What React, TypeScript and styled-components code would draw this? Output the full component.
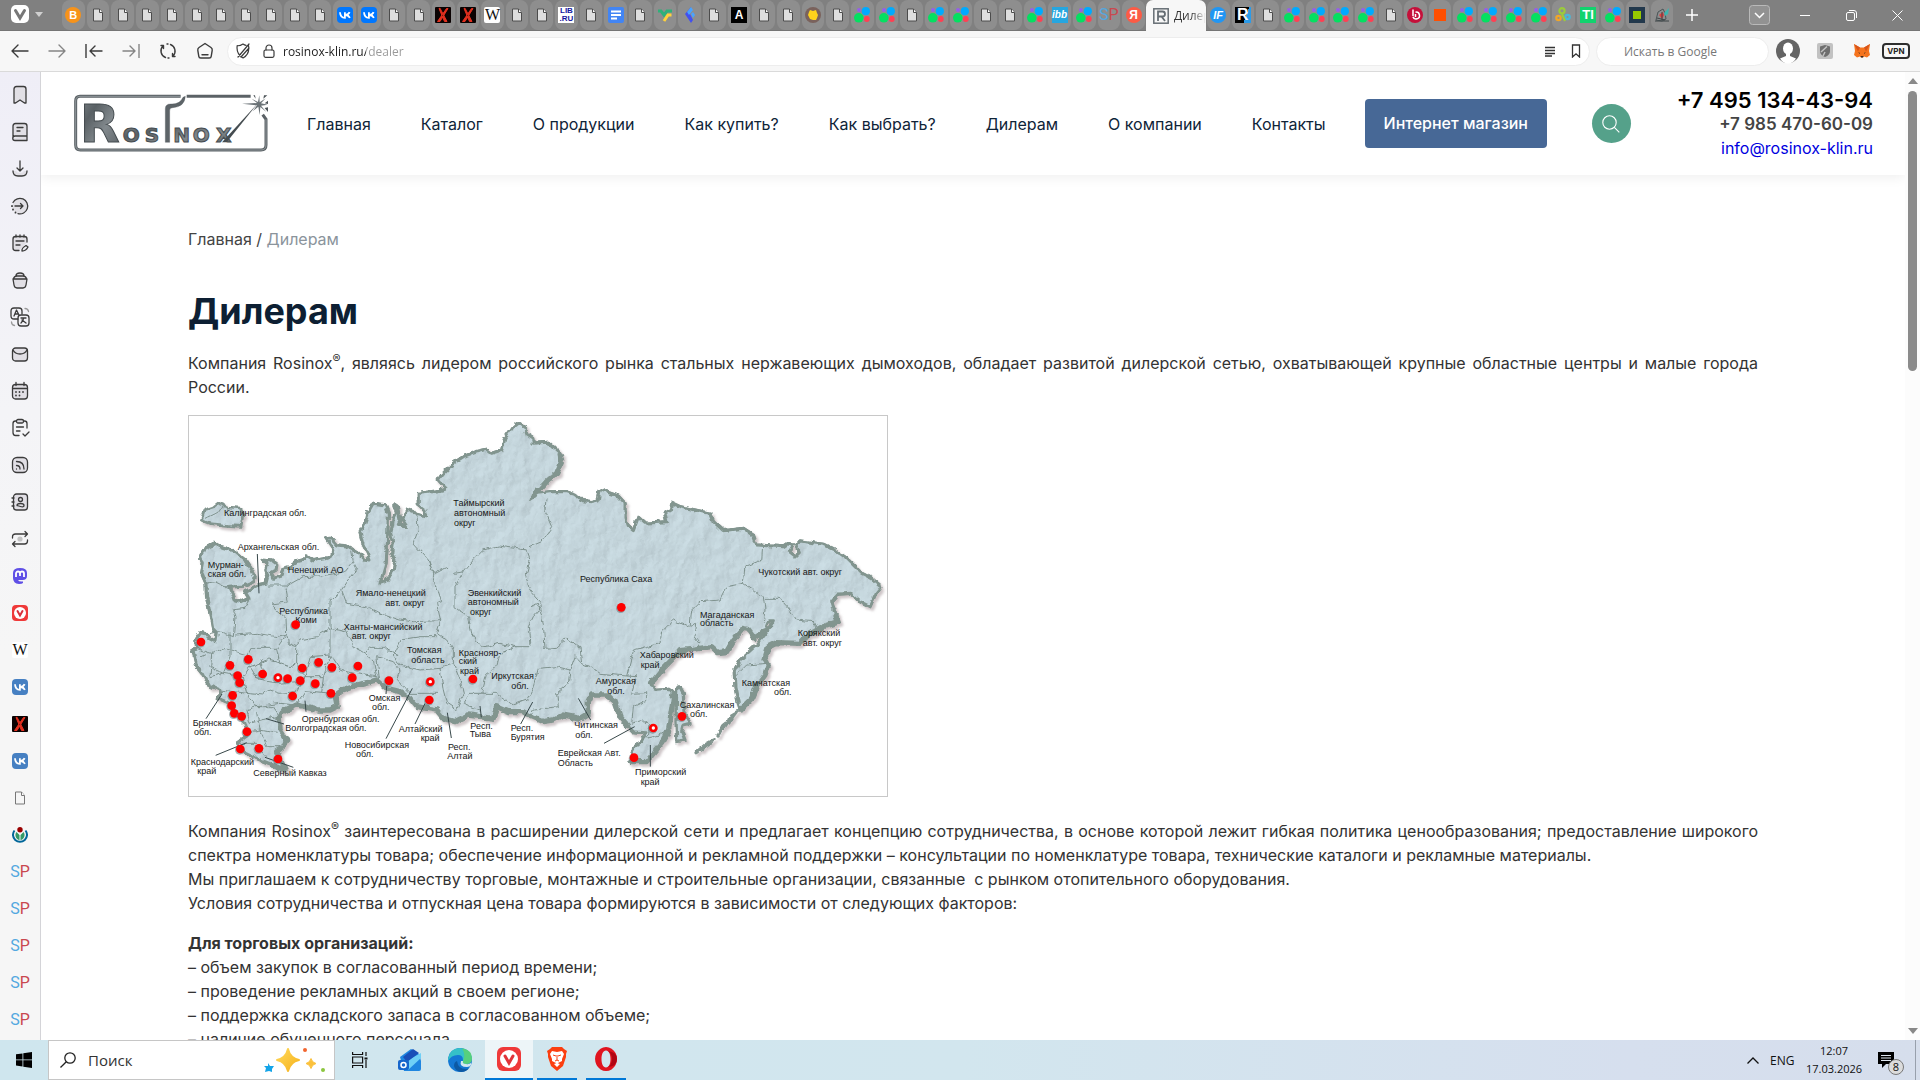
import React from "react";
import styled, { createGlobalStyle } from "styled-components";

const GlobalStyle = createGlobalStyle`
  *, *::before, *::after { box-sizing: border-box; }
  html, body, #root { height: 100%; }
  body { margin: 0; overflow: hidden; background: #fff; }
  button, input { font: inherit; color: inherit; }
  button { border: 0; padding: 0; background: none; cursor: pointer; }
  input { border: 0; padding: 0; background: none; outline: 0; min-width: 0; }
  a { text-decoration: none; }
  svg { display: block; flex: none; }
`;

const uiFont = `"Open Sans", "Noto Sans", sans-serif`;
const siteFont = `Inter, "Open Sans", sans-serif`;

const Screen = styled.div`
  height: 100vh;
  display: flex;
  flex-direction: column;
  font-family: ${uiFont};
`;

/* ---------- tab strip ---------- */

const TabBar = styled.div`
  height: 31px;
  flex: none;
  display: flex;
  background: #808080;
  border-bottom: 1px solid #757575;
`;
const AppMenu = styled.button`
  width: 61px;
  padding: 0 0 2px 11px;
  display: flex;
  align-items: center;
  gap: 6px;
`;
const TabList = styled.div`
  flex: 1;
  display: flex;
  min-width: 0;
`;
const Tab = styled.button<{ $active?: boolean }>`
  flex: ${(p) => (p.$active ? "0 0 60px" : "1 1 0")};
  min-width: 0;
  height: ${(p) => (p.$active ? 31 : 30)}px;
  margin: 0 ${(p) => (p.$active ? 0 : 1)}px;
  padding: ${(p) => (p.$active ? "0 4px 0 7px" : "0")};
  display: flex;
  align-items: center;
  justify-content: ${(p) => (p.$active ? "flex-start" : "center")};
  gap: 5px;
  overflow: hidden;
  border-radius: ${(p) => (p.$active ? "7px 7px 0 0" : "8px")};
  background: ${(p) => (p.$active ? "#f7f7f7" : "#8e8e8e")};
`;
const TabTitle = styled.span`
  font-size: 12px;
  white-space: nowrap;
  color: transparent;
  background: linear-gradient(90deg, #333 18px, #f7f7f7 32px);
  background-clip: text;
`;
const WindowButtons = styled.div`
  width: 246px;
  display: flex;
  align-items: center;
  color: #fff;
`;
const WinButton = styled.button<{ $gap?: number }>`
  width: ${(p) => (p.$gap === undefined ? 46 : 36)}px;
  height: 30px;
  margin-right: ${(p) => p.$gap ?? 0}px;
  display: flex;
  align-items: center;
  justify-content: center;
`;

/* Square favicon made of one or a few letters */
const Glyph = styled.span<{ $bg: string; $fg: string; $size?: number; $r?: number; $font?: string }>`
  width: 16px;
  height: 16px;
  flex: none;
  display: flex;
  align-items: center;
  justify-content: center;
  border-radius: ${(p) => p.$r ?? 0}px;
  background: ${(p) => p.$bg};
  color: ${(p) => p.$fg};
  font: bold ${(p) => p.$size ?? 13}px/16px ${(p) => p.$font ?? `"Liberation Sans", sans-serif`};
`;
const ItalicGlyph = styled(Glyph)`
  font-style: italic;
`;
const SerifGlyph = styled(Glyph)`
  font-weight: 400;
`;
const SpMark = styled.span`
  font: 16px/16px Roboto, "Liberation Sans", sans-serif;
  color: #53a8e0;
  b { font-weight: 400; color: #c9484f; }
`;

const Doc = ({ light }: { light?: boolean }) => (
  <svg width="12" height="16" viewBox="0 0 12 16">
    <path d="M1.500 2h6l3 3.500V14h-9z" fill={light ? "#f6f6f6" : "#dedede"} stroke={light ? "#777" : "#4c4c4c"} strokeWidth="1" />
    <path d="M7.500 2v3.500h3" fill="#fff" stroke={light ? "#777" : "#4c4c4c"} strokeWidth="1" />
  </svg>
);
const Vk = ({ tone = "#0077ff" }: { tone?: string }) => (
  <svg width="16" height="16" viewBox="0 0 16 16">
    <rect width="16" height="16" rx="4" fill={tone} />
    <path d="M3 5.200c.2 3.400 2 5.600 4.900 5.600V5.200M12.600 5.200c-.6 1.500-1.900 2.600-3.900 2.800 2 .2 3.500 1.300 4.200 2.800" fill="none" stroke="#fff" strokeWidth="1.800" />
  </svg>
);
const Avito = () => (
  <svg width="16" height="16" viewBox="0 0 16 16">
    <circle cx="5" cy="3" r="2" fill="#965eeb" />
    <circle cx="11.800" cy="4.200" r="4.100" fill="#0af" />
    <circle cx="4.800" cy="10.800" r="4.800" fill="#04e061" />
    <circle cx="12.800" cy="12" r="2.900" fill="#ff4053" />
  </svg>
);
const XMark = () => (
  <svg width="16" height="16" viewBox="0 0 16 16">
    <rect width="16" height="16" rx="1" fill="#0a0202" />
    <path d="M4 1.500 5 1.200 12 14.500h-2.500zM13 1.500h-1.500L2.500 14.500H5z" fill="#e3301f" stroke="#e3301f" />
  </svg>
);
const Bitcoin = () => <Glyph $bg="#f7931a" $fg="#fff" $r={8} $size={11}>B</Glyph>;
const Wiki = () => <SerifGlyph $bg="#fff" $fg="#111" $r={2} $size={16} $font={`"Liberation Serif", serif`}>W</SerifGlyph>;
const LibText = styled.span`
  width: 16px;
  height: 16px;
  background: #fff;
  color: #1515a0;
  font: bold 8px/8px "Liberation Sans", sans-serif;
  text-align: center;
`;
const GDoc = () => (
  <svg width="16" height="16" viewBox="0 0 16 16">
    <rect width="16" height="16" rx="2" fill="#4285f4" />
    <path d="M3 4.500h10M3 8h10M3 11.500h6" stroke="#fff" strokeWidth="1.800" />
  </svg>
);
const Swoosh = () => (
  <svg width="16" height="16" viewBox="0 0 16 16">
    <path d="M1 4h3l3 4 3-4h5" fill="none" stroke="#2fb07a" strokeWidth="3" />
    <path d="M14.500 8h-3.500L7 14" fill="none" stroke="#ffd23c" strokeWidth="3" />
  </svg>
);
const BlueArrow = () => (
  <svg width="16" height="16" viewBox="0 0 16 16">
    <path d="M9 0 3 7l6 9 2-3-3-6z" fill="#4250f0" />
    <path d="m9 0 2 3-4 5-2-3zM9 7l2-2 2 3-2 3z" fill="#4aa3ff" />
  </svg>
);
const GoldSeal = () => (
  <svg width="16" height="16" viewBox="0 0 16 16">
    <circle cx="8" cy="8" r="8" fill="#7a625c" />
    <path d="m5 3 3 1 3-1 1 3 1 2-1 3-1 2H8l-3-1-1-2-1-2 1-3z" fill="#ffd21c" />
  </svg>
);
const Beats = () => (
  <svg width="16" height="16" viewBox="0 0 16 16">
    <circle cx="8" cy="8" r="8" fill="#c5103a" />
    <path d="M6 2.500V9M8.500 5.200a3.400 3.400 0 1 1-2.600 4.500M8.500 7v3" fill="none" stroke="#fff" strokeWidth="1.500" />
  </svg>
);
const MapPin = () => (
  <svg width="16" height="16" viewBox="0 0 16 16" fill="none" strokeWidth="2.200">
    <circle cx="7" cy="3.800" r="2.600" stroke="#9bcb3c" />
    <circle cx="3.500" cy="11" r="2.200" stroke="#f0a629" />
    <circle cx="12.500" cy="10" r="2.200" stroke="#4bb7d8" />
    <path d="m7 7 3 7" stroke="#9bcb3c" />
  </svg>
);
const Chip = () => (
  <svg width="16" height="16" viewBox="0 0 16 16">
    <rect width="16" height="16" fill="#22384c" />
    <rect x="4" y="4" width="8" height="8" fill="#97c800" />
  </svg>
);
const Bird = () => (
  <svg width="16" height="16" viewBox="0 0 16 16">
    <path d="M2 13 4 5l5-3 2 4 1 6-4 2z" fill="none" stroke="#4a5558" />
    <path d="m5 8 4-3 1 3-2 4z" fill="#e23f3f" />
    <path d="m10 6 5-5-1 6-3 2z" fill="#3cb5b0" />
    <path d="M1 14h14M3 11l8 2M8 5v8" stroke="#3d4547" />
  </svg>
);
const OrangeBox = styled.span`
  width: 12px;
  height: 12px;
  background: #ff4f00;
`;
const RosFavicon = () => (
  <svg width="16" height="16" viewBox="0 0 16 16" fill="none" stroke="#666e74">
    <rect x=".8" y=".8" width="14.400" height="14.400" strokeWidth="1.500" />
    <path d="M5 13V3.500h4.500a2.500 2.500 0 0 1 0 5H5.500M8.500 8.500 12 13" strokeWidth="1.800" />
  </svg>
);
const Mark = ({ kind }: { kind: string }) => {
  switch (kind) {
    case "b": return <Bitcoin />;
    case "v": return <Vk />;
    case "x": return <XMark />;
    case "w": return <Wiki />;
    case "l": return <LibText>LIB .RU</LibText>;
    case "g": return <GDoc />;
    case "s": return <Swoosh />;
    case "f": return <BlueArrow />;
    case "A": return <Glyph $bg="#000" $fg="#fff" $size={12}>A</Glyph>;
    case "y": return <GoldSeal />;
    case "a": return <Avito />;
    case "i": return <ItalicGlyph $bg="#26a6e0" $fg="#fff" $size={10}>ibb</ItalicGlyph>;
    case "p": return <SpMark>S<b>P</b></SpMark>;
    case "Y": return <Glyph $bg="#fc5b45" $fg="#fff" $r={8} $size={12}>Я</Glyph>;
    case "F": return <ItalicGlyph $bg="#2196f3" $fg="#fff" $r={8} $size={11}>IF</ItalicGlyph>;
    case "R": return <Glyph $bg="linear-gradient(110deg, #000 65%, #2c9be8 66%)" $fg="#fff" $size={16}>R</Glyph>;
    case "B": return <Beats />;
    case "o": return <OrangeBox />;
    case "m": return <MapPin />;
    case "T": return <Glyph $bg="#12d36e" $fg="#fff" $size={13}>TI</Glyph>;
    case "c": return <Chip />;
    case "h": return <Bird />;
    default: return <Doc />;
  }
};
const tabsBefore = "bddddddddddvvddxxwddldgdsfdAddydaadaaddaiapY".split("");
const tabsAfter = "FRdaaaadBoaaaamTach".split("");

const TabStrip = () => (
  <TabBar>
    <AppMenu aria-label="Vivaldi">
      <svg width="18" height="18" viewBox="0 0 18 18">
        <rect width="18" height="18" rx="5" fill="#fff" />
        <path d="M4.500 5.500 9 13l4.500-7.500" fill="none" stroke="#777" strokeWidth="3" strokeLinecap="round" />
      </svg>
      <svg width="8" height="5" viewBox="0 0 8 5"><path d="M0 0h8L4 5z" fill="#d0d0d0" /></svg>
    </AppMenu>
    <TabList>
      {tabsBefore.map((k, i) => <Tab key={i}><Mark kind={k} /></Tab>)}
      <Tab $active><RosFavicon /><TabTitle>Дилерам</TabTitle></Tab>
      {tabsAfter.map((k, i) => <Tab key={i}><Mark kind={k} /></Tab>)}
    </TabList>
    <WindowButtons>
      <WinButton $gap={26} aria-label="Новая вкладка"><svg width="12" height="12" viewBox="0 0 12 12"><path d="M6 0v12M0 6h12" stroke="#fff" strokeWidth="1.500" /></svg></WinButton>
      <WinButton aria-label="Список вкладок">
        <svg width="21" height="20" viewBox="0 0 21 20" fill="none">
          <rect x=".5" y=".5" width="20" height="19" rx="3" fill="#929292" stroke="#b9b9b9" />
          <path d="m6 8 4.500 4.500L15 8" stroke="#fff" strokeWidth="1.500" />
        </svg>
      </WinButton>
      <WinButton aria-label="Свернуть"><svg width="10" height="10"><path d="M0 5.500h10" stroke="#fff" /></svg></WinButton>
      <WinButton aria-label="Восстановить">
        <svg width="11" height="11" viewBox="0 0 11 11" fill="none" stroke="#fff">
          <rect x=".5" y="2.500" width="8" height="8" rx="1.500" />
          <path d="M3 .5h5a2.500 2.500 0 0 1 2.500 2.500v5" />
        </svg>
      </WinButton>
      <WinButton aria-label="Закрыть"><svg width="11" height="11" viewBox="0 0 11 11"><path d="m.5.500 10 10m0-10-10 10" stroke="#fff" /></svg></WinButton>
    </WindowButtons>
  </TabBar>
);

/* ---------- address bar ---------- */

const AddressBar = styled.div`
  height: 41px;
  flex: none;
  display: flex;
  align-items: center;
  padding: 0 10px 0 1px;
  background: #f7f7f7;
  border-bottom: 1px solid #dadada;
`;
const ToolButton = styled.button`
  width: 37px;
  height: 30px;
  flex: none;
  display: flex;
  align-items: center;
  justify-content: center;
`;
const Field = styled.label<{ $width?: number }>`
  height: 29px;
  flex: ${(p) => (p.$width ? `0 0 ${p.$width}px` : "1")};
  display: flex;
  align-items: center;
  margin-left: ${(p) => (p.$width ? 6 : 4)}px;
  padding: 0 ${(p) => (p.$width ? 27 : 8)}px;
  background: #fff;
  border: 1px solid #ededed;
  border-radius: 15px;
  font-size: 13px;
`;
const UrlInput = styled.input`
  flex: 1;
  margin-left: 7px;
  font-size: 12px;
  color: transparent;
  background: linear-gradient(90deg, #1c1c1c 83px, #999 83px);
  background-clip: text;
`;
const SearchInput = styled.input`
  width: 100%;
  font-size: 12px;
  &::placeholder { color: #777; opacity: 1; }
`;
const Vpn = styled.button`
  width: 28px;
  height: 16px;
  margin-left: 2px;
  border: 2px solid #2e2e2e;
  border-radius: 4px;
  font: bold 8px/12px Inter, sans-serif;
  color: #222;
`;
const stroke = { fill: "none", stroke: "#3b3b3b", strokeWidth: 1.4, strokeLinecap: "round" as const, strokeLinejoin: "round" as const };

const Toolbar = () => (
  <AddressBar>
    <ToolButton aria-label="Назад"><svg width="18" height="14" viewBox="0 0 18 14" {...stroke}><path d="M17 7H1m6-6L1 7l6 6" /></svg></ToolButton>
    <ToolButton aria-label="Вперёд"><svg width="18" height="14" viewBox="0 0 18 14" {...stroke} stroke="#858585"><path d="M1 7h16m-6-6 6 6-6 6" /></svg></ToolButton>
    <ToolButton aria-label="В начало"><svg width="18" height="14" viewBox="0 0 18 14" {...stroke}><path d="M1 0v14M17 7H5m5-5L5 7l5 5" /></svg></ToolButton>
    <ToolButton aria-label="В конец"><svg width="18" height="14" viewBox="0 0 18 14" {...stroke} stroke="#858585"><path d="M17 0v14M1 7h12M8 2l5 5-5 5" /></svg></ToolButton>
    <ToolButton aria-label="Обновить"><svg width="18" height="18" viewBox="0 0 18 18" {...stroke}><path d="M6.500 15.500A7 7 0 0 1 4 4M2 3.500l2.500 0v3M11.500 2.500A7 7 0 0 1 14 14m2 .5-2.500 0v-3M8 2h1M9 16h1" /></svg></ToolButton>
    <ToolButton aria-label="Домой"><svg width="18" height="18" viewBox="0 0 18 18" {...stroke}><path d="m9 1.500 6 4q1.500 1 1.200 2.800l-1 6Q15 16 13.300 16H4.700Q3 16 2.800 14.300l-1-6Q1.500 6.500 3 5.500zM6 12.800h6" /></svg></ToolButton>
    <Field>
      <svg width="14" height="16" viewBox="0 0 14 16" {...stroke} strokeWidth="1.200"><path d="M12.500 2.500Q14 11 7 15 0 11 1.200 2.700 4 3 7 1q1.500 1 3 1.400M13 1 2 14M13 5 5 14" /></svg>
      <svg width="26" height="14" viewBox="0 0 26 14" {...stroke} strokeWidth="1.200"><rect x="14" y="6" width="10" height="7.300" rx="1.500" /><path d="M16 6V4a3 3 0 0 1 6 0v2" /></svg>
      <UrlInput aria-label="Адрес" defaultValue="rosinox-klin.ru/dealer" />
      <svg width="36" height="14" viewBox="0 0 36 14" fill="none" stroke="#333" strokeWidth="1.300"><path d="M0 3.500h10M0 6.500h10M0 9.500h10M0 12h7M27.500 1h7v12L31 9.800 27.500 13z" /></svg>
    </Field>
    <Field $width={173}><SearchInput aria-label="Поиск в Google" placeholder="Искать в Google" /></Field>
    <ToolButton aria-label="Профиль">
      <svg width="26" height="26" viewBox="0 0 26 26"><circle cx="13" cy="13" r="12" fill="#646464" /><ellipse cx="13" cy="10.500" rx="5" ry="6" fill="#fff" /><path d="M11 15h4v3l6 2.500Q18 25.500 13 25.500T5 20.500L11 18z" fill="#fff" /></svg>
    </ToolButton>
    <ToolButton aria-label="Защита">
      <svg width="16" height="16" viewBox="0 0 16 16"><rect width="16" height="16" rx="2" fill="#c2c2c2" /><path d="M3 3.500 8 2l5 1.500V8q0 4-5 6-5-2-5-6z" fill="#6e6e6e" /><path d="m4 9 6-5.500M6 13l2-4" stroke="#c2c2c2" strokeWidth="1.500" /></svg>
    </ToolButton>
    <ToolButton aria-label="MetaMask">
      <svg width="16" height="16" viewBox="0 0 16 16"><path d="m0 1 6 3.500h4L16 1l-1 7 1 4-3 2.500-3-1-1 1H7l-1-1-3 1L0 12l1-4z" fill="#f5741e" /><path d="m0 1 6 3.500-2 4zM16 1l-6 3.500 2 4z" fill="#d9541a" /><path d="m4 9 2 1v1zM12 9l-2 1v1zM6.500 13h3L9 14.500H7z" fill="#3a2a22" /></svg>
    </ToolButton>
    <Vpn>VPN</Vpn>
  </AddressBar>
);

/* ---------- side panel ---------- */

const Workspace = styled.div`
  flex: 1;
  min-height: 0;
  display: flex;
`;
const Panel = styled.nav`
  width: 41px;
  flex: none;
  padding-top: 4px;
  display: flex;
  flex-direction: column;
  overflow: hidden;
  background: linear-gradient(#efeef7, #f4f4f7 35%, #f6f6f6 60%);
  border-right: 1px solid #d4d4d8;
`;
const PanelButton = styled.button`
  height: 37px;
  flex: none;
  display: flex;
  align-items: center;
  justify-content: center;
`;
const PanelIcon = ({ children }: { children: React.ReactNode }) => (
  <svg width="20" height="20" viewBox="0 0 20 20" {...stroke} strokeWidth="1.300">{children}</svg>
);
const soft = "#e1dfe5";
const panelItems: [string, React.ReactNode][] = [
  ["Закладки", <PanelIcon><path d="M4 4q0-2.500 2.500-2.500h7Q16 1.500 16 4v14l-1.500 0L10 15l-4.500 3H4z" fill={soft} /></PanelIcon>],
  ["Чтение", <PanelIcon><path d="M3 16V4q0-2.500 2.500-2.500h9Q17 1.500 17 4v10H5a2 2 0 0 0 0 4.500h12V14M7 5.500h6M7 9h3" fill={soft} /></PanelIcon>],
  ["Загрузки", <PanelIcon><path d="M10 2v10m-3-3 3 3 3-3" /><path d="M3 12q0 5 5 5h4q5 0 5-5l-3 0q-1 2-4 2t-4-2z" fill={soft} stroke="none" /><path d="M3 12q0 5 5 5h4q5 0 5-5" /></PanelIcon>],
  ["История", <PanelIcon><circle cx="10" cy="10" r="7.500" fill={soft} stroke="none" /><path d="M3 6.500a7.800 7.800 0 1 1 5 11.200M5 10h8m-2.500-2.500L13 10l-2.500 2.500" /><path d="M2 10v.2M3 13.500v.2M5.500 16.500v.2" strokeWidth="1.800" /></PanelIcon>],
  ["Заметки", <PanelIcon><path d="M17 9V6q0-2.500-2.500-2.500h-9Q3 3.500 3 6v9q0 2.500 2.500 2.500H9" fill={soft} /><path d="M6 2v2M10 2v2M14 2v2M6 8h8M6 12h4M12 18q-.5-3 4-5.500l2 1.500q-2 4-6 4" /></PanelIcon>],
  ["Окна", <PanelIcon><path d="M3 9h14l-1 6q-.5 3-3 3H7q-2.500 0-3-3zM3.500 9Q4 6 7 6h6q3 0 3.500 3M6 6q0-3 4-3t4 3" fill={soft} /></PanelIcon>],
  ["Переводчик", <PanelIcon><path d="M8 12H4q-3 0-3-3V4q0-3 3-3h5q3 0 3 3v3" /><rect x="8" y="8" width="11" height="11" rx="3" /><path d="M4 9l2.500-6L9 8M5 7h3M11 11h5M13.500 11q0 3-2.500 5M12 13l4 3" /><path d="M15 1.500q3 0 3.500 3M1.500 15q0 3 3 3.500" stroke="#999" /></PanelIcon>],
  ["Почта", <PanelIcon><rect x="2.500" y="4" width="15" height="13" rx="3" fill={soft} /><path d="M3 6q2 4 7 4t7-4" /></PanelIcon>],
  ["Календарь", <PanelIcon><rect x="2.500" y="3.500" width="15" height="14.500" rx="3" fill={soft} /><path d="M6 1.500v3M14 1.500v3M3 7.500h14" /><path d="M9.500 11v.1M13 11v.1M6 14.500v.1M9.500 14.500v.1M6 11v.1" strokeWidth="1.800" /></PanelIcon>],
  ["Задачи", <PanelIcon><path d="M17 10V5.500Q17 3 14.500 3h-9Q3 3 3 5.500v9Q3 17.500 5.500 17.500H9M6.500 9h7M6.500 13h3.500M13 16l2 2 4-4" /><rect x="6.500" y="1.500" width="7" height="3.500" rx="1.500" fill={soft} /></PanelIcon>],
  ["Ленты", <PanelIcon><rect x="2.500" y="2.500" width="15" height="15" rx="4.500" fill={soft} /><path d="M6.500 14v.1M6.500 10.500q3.500 0 3.500 3.500M6.500 6.500q7.500 0 7.500 7.500" /></PanelIcon>],
  ["Контакты", <PanelIcon><rect x="3.500" y="2" width="14" height="16" rx="3" fill={soft} /><circle cx="10.500" cy="7.500" r="2" /><path d="M7 13.500q0-2 3.500-2t3.500 2-3.500 1-3.500-1M2 6h2M2 10h2M2 14h2" /></PanelIcon>],
  ["Сессии", <PanelIcon><circle cx="10" cy="10" r="2.600" fill="#c4c4c4" stroke="none" /><path d="M2.500 9V8q0-3 3-3h12M15 2.500 17.500 5 15 7.500M17.500 11v1q0 3-3 3h-12M5 12.500 2.500 15 5 17.500" /></PanelIcon>],
  ["Mastodon", <svg width="16" height="16" viewBox="0 0 16 16"><path d="M1 5q0-5 7-5t7 5v3q0 4-4.500 4H6q1 2 5 1.500V15q-1 1-4 1Q1 15.500 1 10z" fill="#5f4fe6" /><path d="M4 9V5.500a2 2 0 0 1 4 0V8m0-2.500a2 2 0 0 1 4 0V9" fill="none" stroke="#fff" strokeWidth="1.800" /></svg>],
  ["Vivaldi", <svg width="16" height="16" viewBox="0 0 16 16"><rect width="16" height="16" rx="4" fill="#ef3939" /><circle cx="8" cy="8" r="6" fill="#fff" /><path d="m5.500 6 2.500 4.500L10.500 6" fill="none" stroke="#d92f3b" strokeWidth="2" strokeLinecap="round" /></svg>],
  ["Wikipedia", <Wiki />],
  ["VK", <Vk tone="#4680c2" />],
  ["X", <XMark />],
  ["VK 2", <Vk tone="#4680c2" />],
  ["Страница", <Doc light />],
  ["Wikimedia", <svg width="16" height="16" viewBox="0 0 16 16"><path d="M2.500 3.500a7 7 0 1 0 11 0" fill="none" stroke="#069" strokeWidth="2" /><path d="M4.500 5a5 5 0 0 0 3 8V8zM11.500 5a5 5 0 0 1-3 8V8z" fill="#396" /><circle cx="8" cy="2.700" r="2.700" fill="#900" /></svg>],
  ...[1, 2, 3, 4, 5].map((n): [string, React.ReactNode] => [`SP ${n}`, <SpMark>S<b>P</b></SpMark>]),
];

/* ---------- web page ---------- */

const Page = styled.div`
  flex: 1;
  min-width: 0;
  overflow: hidden;
  background: #fff;
  color: #333;
  font: 16px/24px ${siteFont};
`;
const Header = styled.header`
  height: 103px;
  display: flex;
  align-items: center;
  gap: 39px;
  padding: 0 32px 0 33px;
  box-shadow: 0 2px 12px rgba(0, 0, 0, 0.07);
`;
const Menu = styled.nav`
  display: flex;
  gap: 50px;
  a { color: #0f2438; white-space: nowrap; }
`;
const ShopLink = styled.a`
  padding: 12px 19px 13px;
  border-radius: 4px;
  background: #476896;
  color: #fff;
  font-weight: 500;
  white-space: nowrap;
`;
const RoundButton = styled.button`
  width: 39px;
  height: 39px;
  flex: none;
  margin-left: 6px;
  display: flex;
  align-items: center;
  justify-content: center;
  border-radius: 50%;
  background: #55a18a;
`;
const Contacts = styled.address`
  margin-left: auto;
  display: flex;
  flex-direction: column;
  align-items: flex-end;
  font-style: normal;
  white-space: nowrap;
`;
const Phone = styled.a<{ $main?: boolean }>`
  color: ${(p) => (p.$main ? "#000" : "#444")};
  font-size: ${(p) => (p.$main ? 22 : 17)}px;
  font-weight: 600;
`;
const Email = styled.a`
  color: #0000e0;
`;
const Content = styled.main`
  max-width: 1570px;
  margin: 0 auto;
  padding-top: 52px;
`;
const Crumbs = styled.nav`
  color: #444;
  a { color: inherit; }
  span { color: #8b949c; }
`;
const Title = styled.h1`
  margin: 38px 0 18px;
  font-size: 36px;
  line-height: 44px;
  font-weight: 700;
  color: #0d1f33;
`;
const Text = styled.p`
  margin: 0 0 16px;
  text-align: justify;
  sup { font-size: 12px; line-height: 0; }
`;
const MapFrame = styled.figure`
  width: 700px;
  max-width: 100%;
  margin: 0 0 22px;
  svg { width: 100%; height: auto; }
`;

const Scrollbar = styled.div`
  width: 15px;
  flex: none;
  display: flex;
  flex-direction: column;
  align-items: center;
  gap: 7px;
  padding: 6px 0;
  background: #fcfcfc;
`;
const Thumb = styled.div`
  width: 9px;
  height: 280px;
  border-radius: 5px;
  background: #8b8b8b;
`;
const Spacer = styled.div`
  flex: 1;
`;

const Logo = () => (
  <svg width="194" height="60" viewBox="30 22 582 180" role="img" aria-label="Rosinox">
    <defs>
      <linearGradient id="steel" x1="0" y1="0" x2="1" y2="1">
        <stop offset="0" stopColor="#7b8387" />
        <stop offset=".3" stopColor="#5a6165" />
        <stop offset=".6" stopColor="#82898d" />
        <stop offset="1" stopColor="#565d61" />
      </linearGradient>
    </defs>
    <g fill="none" stroke="#5b6266" strokeWidth="9">
      <path d="M350 29H48Q35 29 35 43v132q0 15 14 15h542q15 0 15-15V98l-10-14" />
      <path d="M368 29h192" />
      <path d="M350 29H48Q35 29 35 43v132q0 15 14 15h542q15 0 15-15V98" stroke="#a9b0b3" strokeWidth="2" />
    </g>
    <g fill="url(#steel)" stroke="#454c50" strokeWidth="3" fontFamily="DejaVu Sans, sans-serif" fontWeight="bold">
      <text x="47" y="167" fontSize="156">R</text>
      <text x="176 242 328 386 456" y="167" fontSize="60">OSNOX</text>
    </g>
    <path d="M304 167V66q0-14 16-14 28 2 37-20l7-3q-2 32-38 34-10 0-9 10v94z" fill="#5d6468" stroke="#485054" />
    <path d="m474 167 108-118-94 118z" fill="#454c50" />
    <path d="m586 26 1 21 18-12-14 15 20 4-20 3 16 19-18-15-2 24-4-25-17 14 13-18-45-5 45-2-16-13 19 10z" fill="#6b7377" />
    <path d="m568 26 7 10-2-10zM600 26h10l-12 10zM612 42v10l-10-2zM612 62v14l-10-12z" fill="#4c5357" />
  </svg>
);

/* Coordinates below are in thirds of a pixel of the 700px-wide map. */
const mainland =
  "M38 722 50 715 48 690 62 668 80 672 90 685 108 695 112 670 98 655 88 600 80 560 78 520 65 490 70 462 62 440 75 415 105 400 120 410 160 422 195 450 215 480 225 500 220 515 190 528 165 530 150 532 158 550 165 570 185 575 207 565 195 545 235 525 258 520 262 505 255 480 262 460 250 448 275 450 290 462 288 480 270 490 280 505 300 500 310 475 330 470 350 455 372 450 378 438 400 452 440 445 462 430 455 410 438 385 448 382 470 405 500 408 530 425 555 448 570 450 560 425 548 400 540 365 555 340 568 300 580 280 615 285 625 310 622 400 618 460 600 520 615 515 640 480 645 450 635 430 640 400 632 370 638 345 640 325 650 310 642 285 652 292 660 330 655 340 682 352 665 325 682 298 710 310 740 318 735 300 715 285 715 250 750 246 790 240 795 232 775 210 785 195 800 180 820 160 850 140 890 125 920 118 935 130 965 120 975 85 1000 50 1015 38 1040 55 1035 70 1058 85 1060 100 1105 97 1140 130 1145 155 1130 190 1100 215 1050 268 1075 250 1110 245 1160 245 1190 255 1205 272 1235 275 1255 270 1260 245 1275 237 1285 248 1315 258 1335 280 1335 320 1345 350 1360 362 1370 335 1375 322 1395 340 1460 335 1455 310 1475 298 1478 280 1500 290 1590 310 1600 335 1630 362 1690 355 1720 375 1730 405 1770 408 1810 410 1825 400 1840 405 1828 425 1845 438 1858 425 1850 405 1860 393 1930 403 1965 420 2000 445 2045 490 2075 505 2105 530 2085 555 2070 590 2040 575 2010 550 1975 552 1955 575 1965 610 1975 635 1930 650 1885 675 1860 700 1790 698 1765 710 1755 745 1765 765 1755 795 1730 830 1715 865 1680 900 1675 880 1665 830 1663 785 1680 750 1730 705 1770 655 1780 635 1765 635 1755 660 1725 685 1705 658 1690 655 1660 690 1640 725 1615 728 1595 710 1540 718 1500 722 1485 740 1450 775 1410 825 1430 838 1470 835 1482 850 1475 900 1465 965 1445 1000 1400 1055 1350 1055 1355 1020 1380 1000 1395 968 1360 965 1345 950 1320 920 1305 875 1280 855 1235 855 1225 875 1225 910 1200 925 1150 915 1120 930 1090 935 1055 920 1030 905 985 905 950 890 940 925 900 920 865 915 825 935 790 925 770 900 710 890 690 865 660 845 620 835 600 818 590 810 530 825 485 840 465 855 472 890 450 900 415 900 350 885 310 905 298 920 300 960 320 990 310 1010 290 1025 315 1080 280 1065 230 1045 180 1020 170 1000 205 975 195 940 175 920 150 880 115 865 120 840 85 825 70 795 50 770 40 725Z";
const southShore =
  "M1965 610 1975 635 1930 650 1885 675 1860 700 1790 698 1765 710 1755 745 1765 765 1755 795 1730 830 1715 865 1680 900M1755 660 1725 685 1705 658 1690 655 1660 690 1640 725 1615 728 1595 710 1540 718 1500 722 1485 740 1450 775 1410 825M1482 850 1475 900 1465 965 1445 1000 1400 1055 1350 1055M1345 950 1320 920 1305 875 1280 855 1235 855 1225 875 1225 910 1200 925 1150 915 1120 930 1090 935 1055 920 1030 905 985 905 950 890 940 925 900 920 865 915 825 935 790 925 770 900 710 890 690 865 660 845 620 835 600 818 590 810 530 825 485 840 465 855 472 890 450 900 415 900 350 885 310 905 298 920 300 960 320 990 310 1010 290 1025 315 1080 280 1065M1140 130 1145 155 1130 190 1100 215 1060 258";
const islands = [
  "M65 330 75 300 100 292 115 280 145 292 180 295 190 315 185 348 140 345 90 340Z",
  "M1490 835 1500 830 1510 850 1512 900 1530 940 1510 945 1505 965 1515 990 1490 995 1488 930Z",
  "M1548 1028 1602 990 1575 1005ZM1614 978 1640 940 1628 950ZM1646 940 1672 905 1655 915Z",
];
const regionLines = [
  "M78 520 105 515 135 530 165 530M80 672 120 665 160 680 165 620 158 600 195 595 205 570M165 675 235 670 290 680 320 672 318 625 290 600 275 582 325 575 318 540 325 525M325 525 265 525",
  "M325 525 370 500 430 497 495 485 520 455 515 425M520 455 530 475 485 540 500 580 560 590 600 610 660 630 700 635 782 632 770 580 785 575 745 450 700 400 715 360 710 310",
  "M485 540 450 572 450 655 500 665 520 710 555 730 570 712 610 712 655 735M450 655 410 680 360 690 350 710 325 700 320 672M450 655 450 735 480 780 520 790 590 800",
  "M745 450 760 490 800 470 820 490 850 485 880 450 910 420 955 408 1040 420 1050 450 1038 500 1050 540 1090 585 1060 620 1045 650 1050 710 1010 710 960 700 905 712 875 670 865 620 825 590 825 530 850 485",
  "M1050 410 1085 395 1118 350 1095 300 1098 265M782 632 770 670 800 690 820 720 820 760 780 775 720 780 660 765 640 735 660 690 720 680 770 680",
  "M1050 590 1075 580 1090 640 1095 715 1130 712 1160 685 1200 710 1205 760 1240 775 1260 790 1340 798 1370 800 1355 850 1400 848 1400 870 1360 890 1355 940M1010 710 960 730 950 770 920 790 905 850 950 850 1000 885 1040 870 1060 830 1075 775 1130 770 1170 780 1185 740 1205 760",
  "M1340 798 1360 720 1440 700 1445 665 1480 630 1520 650 1550 640 1545 680 1560 700M1530 650 1535 600 1560 575 1620 570 1640 530 1690 520 1720 540 1750 560 1755 600 1750 635M1690 520 1695 470 1745 450 1748 410M1755 565 1800 565 1830 600 1850 630 1900 635 1910 660",
  "M1665 800 1700 765 1760 760M1170 780 1165 820 1130 850 1135 890 1060 900 1050 920M1355 940 1390 930 1410 945 1405 975 1370 1000M1400 985 1440 975 1465 960M820 760 840 810 850 850 830 900 800 880 790 840 780 775M590 740 600 818M590 740 640 755 660 780 650 810 690 850 780 850M905 850 870 850 850 880 900 900M590 800 580 750 555 730",
  "M48 715 95 730 140 715 200 735 210 715 290 715 320 672M95 730 90 800 130 790 150 740M130 790 190 800 210 770 270 750 300 760 290 715M190 800 200 850 250 855 270 840 300 850 350 845 375 800 350 760 350 710M210 770 235 810 300 820 350 815M375 800 430 800 450 735M430 800 425 850 465 855M375 800 390 740 450 735M120 840 200 850M200 850 230 890 300 880 345 885M230 890 200 900 210 940M230 890 280 890 300 920M210 940 260 925 298 920M230 905 240 960 290 970M210 965 240 960 260 1010 300 1010M170 1000 230 1000 260 1040M350 885 375 845 425 850M85 770 130 790M300 760 330 770 350 760M60 740 80 730M240 750 255 800M150 670 150 740",
  "M75 325 105 310 135 290 150 300M560 300 545 365M1055 98 1065 90",
];
const leaders = [
  "M232 432 237 550M126 852 78 926M375 872 378 905M258 926 312 942M107 1036 200 998M255 1042 340 1072M697 835 618 986M620 828 618 852M735 880 705 942M802 908 814 984M900 888 904 922M1058 876 1022 942",
  "M1195 865 1232 930M1364 950 1272 1000M1411 1005 1411 1070",
];
const dots: [number, number, boolean?][] = [
  [63, 696], [150, 766], [205, 748], [173, 797], [179, 818], [248, 792], [294, 803, true], [323, 806], [367, 774],
  [416, 757], [456, 772], [361, 812], [406, 821], [338, 858], [453, 850], [517, 803], [534, 768], [627, 812],
  [751, 815, true], [748, 870], [879, 807], [347, 644], [158, 856], [155, 887], [163, 910], [185, 919], [201, 965],
  [181, 1017], [237, 1015], [294, 1047], [1324, 592], [1420, 954, true], [1506, 919], [1362, 1043],
];
const labels: [number, number, string][] = [
  [132, 319, "Калинградская обл."], [173, 420, "Архангельская обл."], [83, 475, "Мурман-"], [83, 501, "ская обл."],
  [323, 489, "Ненецкий АО"], [298, 612, "Республика"], [346, 640, "Коми"], [527, 558, "Ямало-ненецкий"], [616, 587, "авт. округ"],
  [491, 661, "Ханты-мансийский"], [515, 687, "авт. округ"], [820, 288, "Таймырский"], [822, 319, "автономный"], [822, 348, "округ"],
  [863, 557, "Эвенкийский"], [863, 585, "автономный"], [870, 614, "округ"], [681, 729, "Томская"], [694, 759, "область"],
  [836, 738, "Краснояр-"], [836, 762, "ский"], [840, 793, "край"], [934, 808, "Иркутская"], [994, 837, "обл."],
  [566, 872, "Омская"], [576, 900, "обл."], [365, 935, "Оренбургская обл."], [316, 964, "Волгоградская обл."], [38, 948, "Брянская"], [42, 974, "обл."],
  [32, 1065, "Краснодарский"], [52, 1092, "край"], [220, 1097, "Северный Кавказ"], [494, 1013, "Новосибирская"], [528, 1042, "обл."],
  [656, 965, "Алтайский"], [722, 993, "край"], [804, 1020, "Респ."], [802, 1047, "Алтай"], [871, 956, "Респ."], [869, 982, "Тыва"],
  [992, 963, "Респ."], [992, 990, "Бурятия"], [1200, 516, "Республика Саха"], [1735, 495, "Чукотский авт. округ"],
  [1560, 623, "Магаданская"], [1560, 648, "область"], [1853, 678, "Корякский"], [1868, 707, "авт. округ"], [1379, 744, "Хабаровский"], [1382, 773, "край"],
  [1247, 822, "Амурская"], [1282, 852, "обл."], [1685, 828, "Камчатская"], [1782, 855, "обл."], [1499, 895, "Сахалинская"], [1530, 921, "обл."],
  [1183, 955, "Читинская"], [1186, 983, "обл."], [1133, 1037, "Еврейская Авт."], [1133, 1067, "Область"], [1365, 1094, "Приморский"], [1382, 1126, "край"],
];

const DealerMap = () => (
  <MapFrame>
    <svg viewBox="24 15 2100 1146" role="img" aria-label="Карта дилеров Rosinox">
      <defs>
        <filter id="relief" x="0" y="0" width="100%" height="100%" colorInterpolationFilters="sRGB">
          <feTurbulence type="fractalNoise" baseFrequency=".022 .014" numOctaves="4" seed="7" result="noise" />
          <feDiffuseLighting in="noise" surfaceScale="5" diffuseConstant="1.09" lightingColor="#cfdfe6" result="light">
            <feDistantLight azimuth="225" elevation="62" />
          </feDiffuseLighting>
          <feColorMatrix in="light" type="matrix" values=".4 0 0 0 .456  0 .4 0 0 .499  0 0 .4 0 .514  0 0 0 1 0" result="tone" />
          <feComposite in="tone" in2="SourceAlpha" operator="in" />
        </filter>
        <filter id="coast" x="-5%" y="-5%" width="110%" height="110%" colorInterpolationFilters="sRGB">
          <feTurbulence type="fractalNoise" baseFrequency=".05" numOctaves="2" seed="3" result="n" />
          <feDisplacementMap in="SourceGraphic" in2="n" scale="16" xChannelSelector="R" yChannelSelector="G" result="d" />
          <feDropShadow in="d" dx="7" dy="8" stdDeviation="3" floodColor="#9c8c90" floodOpacity=".5" />
        </filter>
      </defs>
      <rect x="25.500" y="16.500" width="2097" height="1143" fill="#fff" stroke="#c8c8c8" strokeWidth="3" />
      <g filter="url(#coast)">
        <g stroke="#82958f" strokeWidth="10" fill="#c3d4da" strokeLinejoin="round">
          <path d={mainland} />
          {islands.map((d) => <path key={d} d={d} />)}
        </g>
        <g filter="url(#relief)" fill="#c3d4da">
          <path d={mainland} />
          <path d={islands[0]} />
        </g>
        <path d={mainland} fill="none" stroke="#82958f" strokeWidth="9" strokeLinejoin="round" />
        <path d={southShore} fill="none" stroke="#82958f" strokeWidth="16" strokeLinejoin="round" />
        <path d={islands[0]} fill="none" stroke="#82958f" strokeWidth="6" strokeLinejoin="round" />
        <g fill="none" stroke="#7f928e" strokeWidth="3">{regionLines.map((d) => <path key={d} d={d} />)}</g>
      </g>
      <g fill="none" stroke="#38484a" strokeWidth="3">{leaders.map((d) => <path key={d} d={d} />)}</g>
      <g fontFamily="Liberation Sans, Arial, sans-serif" fontSize="27" fill="#161616">
        {labels.map(([x, y, t]) => <text key={`${x}-${y}`} x={x} y={y}>{t}</text>)}
      </g>
      {dots.map(([x, y, open]) => (
        <g key={`${x}-${y}`}>
          <circle cx={x - 2} cy={y + 3} r="14" fill="#6c8084" opacity=".6" />
          <circle cx={x} cy={y} r="13" fill="#f00" />
          {open && <circle cx={x} cy={y} r="5" fill="#fff" />}
        </g>
      ))}
    </svg>
  </MapFrame>
);

const menu = ["Главная", "Каталог", "О продукции", "Как купить?", "Как выбрать?", "Дилерам", "О компании", "Контакты"];

const Site = () => (
  <Page>
    <Header>
      <a href="#home"><Logo /></a>
      <Menu>{menu.map((m) => <a key={m} href="#menu">{m}</a>)}</Menu>
      <ShopLink href="#shop">Интернет магазин</ShopLink>
      <RoundButton aria-label="Поиск по сайту">
        <svg width="18" height="18" viewBox="0 0 18 18" fill="none" stroke="#fff" strokeWidth="1.100"><circle cx="7.500" cy="7.500" r="6.700" /><path d="m12.300 12.300 5 5" /></svg>
      </RoundButton>
      <Contacts>
        <Phone $main href="tel:+74951344394">+7 495 134-43-94</Phone>
        <Phone href="tel:+79854706009">+7 985 470-60-09</Phone>
        <Email href="mailto:info@rosinox-klin.ru">info@rosinox-klin.ru</Email>
      </Contacts>
    </Header>
    <Content>
      <Crumbs><a href="#home">Главная</a> / <span>Дилерам</span></Crumbs>
      <Title>Дилерам</Title>
      <Text>Компания Rosinox<sup>®</sup>, являясь лидером российского рынка стальных нержавеющих дымоходов, обладает развитой дилерской сетью, охватывающей крупные областные центры и малые города России.</Text>
      <DealerMap />
      <Text>
        Компания Rosinox<sup>®</sup> заинтересована в расширении дилерской сети и предлагает концепцию сотрудничества, в основе которой лежит гибкая политика ценообразования; предоставление широкого спектра номенклатуры товара; обеспечение информационной и рекламной поддержки – консультации по номенклатуре товара, технические каталоги и рекламные материалы.<br />
        Мы приглашаем к сотрудничеству торговые, монтажные и строительные организации, связанные&nbsp; с рынком отопительного оборудования.<br />
        Условия сотрудничества и отпускная цена товара формируются в зависимости от следующих факторов:
      </Text>
      <Text>
        <b>Для торговых организаций:</b><br />
        – объем закупок в согласованный период времени;<br />
        – проведение рекламных акций в своем регионе;<br />
        – поддержка складского запаса в согласованном объеме;<br />
        – наличие обученного персонала.
      </Text>
    </Content>
  </Page>
);

/* ---------- taskbar ---------- */

const Taskbar = styled.footer`
  height: 40px;
  flex: none;
  display: flex;
  background: linear-gradient(90deg, #cfe6ee, #d2e6ee 50%, #d6dfee 85%, #d6deec);
  color: #111;
`;
const StartButton = styled.button`
  width: 48px;
  display: flex;
  align-items: center;
  justify-content: center;
`;
const TaskSearch = styled.label`
  width: 287px;
  display: flex;
  align-items: center;
  gap: 12px;
  padding: 0 9px 0 11px;
  background: #fff;
  border: 1px solid #c6c6c6;
`;
const TaskInput = styled.input`
  flex: 1;
  font-size: 15px;
  &::placeholder { color: #333; opacity: 1; }
`;
const TaskButton = styled.button<{ $state?: "open" | "active" }>`
  width: ${(p) => (p.$state === "active" ? 48 : p.$state ? 40 : 50)}px;
  margin: 0 ${(p) => (p.$state === "open" ? 5 : 0)}px 0 ${(p) => (p.$state === "open" ? 4 : 0)}px;
  display: flex;
  align-items: center;
  justify-content: center;
  background: ${(p) => (p.$state === "active" ? "#edf5f8" : "none")};
  border-bottom: ${(p) => (p.$state ? 2 : 0)}px solid #0078d7;
`;
const Tray = styled.div`
  margin-left: auto;
  display: flex;
  align-items: center;
  font-size: 12px;
`;
const TrayLang = styled.span`
  width: 24px;
  margin: 0 12px 0 11px;
`;
const Clock = styled.time`
  width: 56px;
  display: flex;
  flex-direction: column;
  align-items: center;
  line-height: 18px;
  font-size: 11px;
`;
const Notice = styled.button`
  position: relative;
  width: 26px;
  height: 30px;
  margin: 0 11px 0 16px;
`;
const Badge = styled.span`
  position: absolute;
  right: 0;
  bottom: 0;
  width: 16px;
  height: 16px;
  border: 1px solid #777;
  border-radius: 50%;
  background: #dcdcdc;
  font-size: 11px;
  line-height: 14px;
`;
const ShowDesktop = styled.button`
  width: 5px;
  align-self: stretch;
  border-left: 1px solid #98a0ac;
`;

const Desktop = () => (
  <Taskbar>
    <StartButton aria-label="Пуск"><svg width="16" height="16" viewBox="0 0 16 16"><path d="M0 2.300 6.500 1.400v6.100H0zM7.300 1.300 16 0v7.500H7.300zM0 8.300h6.500v6.200L0 13.600zM7.300 8.300H16V16l-8.700-1.300z" /></svg></StartButton>
    <TaskSearch>
      <svg width="16" height="16" viewBox="0 0 16 16" fill="none" stroke="#222" strokeWidth="1.300"><circle cx="10" cy="6" r="5.200" /><path d="M6.300 9.700.500 15.500" /></svg>
      <TaskInput aria-label="Поиск" placeholder="Поиск" />
      <svg width="62" height="26" viewBox="0 0 62 26">
        <defs><linearGradient id="spark" x1="0" y1="0" x2="1" y2="1"><stop offset="0" stopColor="#ffd95a" /><stop offset="1" stopColor="#f6b21c" /></linearGradient></defs>
        <path d="M25 2q2 9 11 11-9 2-11 11-2-9-11-11 9-2 11-11z" fill="url(#spark)" stroke="url(#spark)" strokeWidth="2" strokeLinejoin="round" />
        <path d="M48 11.500q1 4 5 5-4 1-5 5-1-4-5-5 4-1 5-5z" fill="#fbc13c" stroke="#fbc13c" strokeLinejoin="round" />
        <path d="m5 16 2 3 4 0-2 3 0 3-3-1-4 1 1-4-2-2 4 0z" fill="#14a4e8" />
        <circle cx="42" cy="3" r="2" fill="#f2652f" /><circle cx="60" cy="23" r="2" fill="#8cc63f" />
      </svg>
    </TaskSearch>
    <TaskButton aria-label="Представление задач"><svg width="16" height="16" viewBox="0 0 16 16" fill="none" stroke="#111" strokeWidth="1.200"><path d="M.6 0v2.500h10V0M.6 16v-2.500h10V16M.6 5h10v6H.6zM14 0v4M14 8v8" /><path d="M12.500 5.500h3v2h-3z" fill="#111" stroke="none" /></svg></TaskButton>
    <TaskButton aria-label="Outlook"><svg width="24" height="24" viewBox="0 0 24 24"><path d="M2 9 13 1q9 3 10 12v8q0 2-2 2H6z" fill="#1f86e0" /><path d="M8 13 23 5v5L10 22z" fill="#6fd0f6" /><path d="M5 9 15 1l6 4-12 9z" fill="#1a4fb8" /><rect x="0" y="12" width="11" height="10" rx="2" fill="#1666cc" /><circle cx="5.500" cy="17" r="2.500" fill="none" stroke="#fff" strokeWidth="1.500" /></svg></TaskButton>
    <TaskButton aria-label="Edge"><svg width="24" height="24" viewBox="0 0 24 24"><circle cx="12" cy="12" r="12" fill="#1478d4" /><path d="M0 11Q2 0 12 0t12 10q0 6-6 6-5 0-3-4 0-5-5-5Q3 7 0 13z" fill="#35c1c8" /><path d="M14 .200Q24 2 24 10q0 6-6 6-5 0-3-3 3-6-1-12.800z" fill="#5fd36a" opacity=".8" /><path d="M9 13q1 8 9 8 3 0 4-2-3 5-9 5-6-1-7-6 0-4 3-5z" fill="#0c59a4" /><path d="M13 13q-2 6 6 6 3 0 4-2v-2q-2 1.500-5 1-4 0-3-3z" fill="#d3e7ef" /></svg></TaskButton>
    <TaskButton $state="active" aria-label="Vivaldi"><svg width="24" height="24" viewBox="0 0 24 24"><rect width="24" height="24" rx="6" fill="#ef3939" /><circle cx="12" cy="12" r="9" fill="#fff" /><path d="m8 9 4 7 4-7" fill="none" stroke="#e03338" strokeWidth="3" strokeLinecap="round" /></svg></TaskButton>
    <TaskButton $state="open" aria-label="Brave"><svg width="22" height="24" viewBox="0 0 22 24"><path d="m6 0h10l2 2 3 2-1 3 0 3-3 9-6 5-6-5-3-9V7L1 4l3-2z" fill="#fb3f10" /><path d="m6 4 5 1 5-1 2 3-2 5 0 2-5 2.500L6 14v-2L4 7zM8 17l3-1 3 1-3 3z" fill="#fff" /><path d="m7 8 3 1M15 8l-3 1M11 8v5l-2 1m2-1 2 1" stroke="#fb3f10" fill="none" /></svg></TaskButton>
    <TaskButton $state="open" aria-label="Opera"><svg width="24" height="24" viewBox="0 0 24 24"><path fillRule="evenodd" d="M12 0a11 12 0 1 0 .1 0zm0 3.500c3 0 4.500 4 4.500 8.500s-1.500 8.500-4.500 8.500S7.500 16.500 7.500 12 9 3.500 12 3.500z" fill="#e0141f" /><path d="M14 20Q23 19 23 12T14 4q4 3 4 8t-4 8z" fill="#b00614" /></svg></TaskButton>
    <Tray>
      <svg width="12" height="7" viewBox="0 0 12 7" fill="none" stroke="#111" strokeWidth="1.300"><path d="m.5 6.500 5.500-5.500 5.500 5.500" /></svg>
      <TrayLang>ENG</TrayLang>
      <Clock><span>12:07</span><span>17.03.2026</span></Clock>
      <Notice aria-label="Уведомления">
        <svg width="17" height="16" viewBox="0 0 17 16"><path d="M0 0h16v12H8l-4 4v-4H0z" /><path d="M3 3.500h10M3 6h10M3 8.500h10" stroke="#dde4ee" /></svg>
        <Badge>8</Badge>
      </Notice>
      <ShowDesktop aria-label="Свернуть все окна" />
    </Tray>
  </Taskbar>
);

export default function App() {
  return (
    <Screen>
      <GlobalStyle />
      <TabStrip />
      <Toolbar />
      <Workspace>
        <Panel>{panelItems.map(([name, icon]) => <PanelButton key={name} aria-label={name}>{icon}</PanelButton>)}</Panel>
        <Site />
        <Scrollbar>
          <svg width="10" height="6" viewBox="0 0 10 6"><path d="M0 6h10L5 0z" fill="#888" /></svg>
          <Thumb />
          <Spacer />
          <svg width="10" height="6" viewBox="0 0 10 6"><path d="M0 0h10L5 6z" fill="#888" /></svg>
        </Scrollbar>
      </Workspace>
      <Desktop />
    </Screen>
  );
}
